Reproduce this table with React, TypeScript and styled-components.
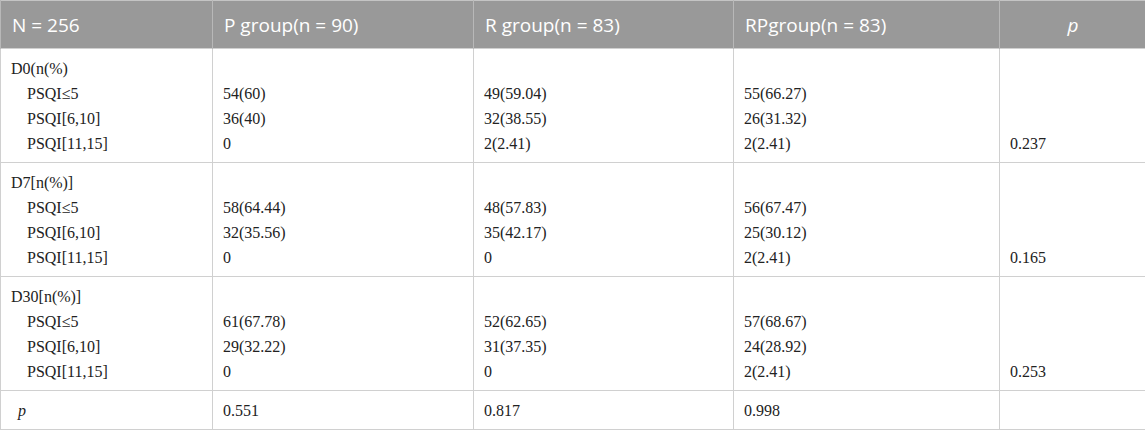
import React from "react";
import styled, { createGlobalStyle } from "styled-components";

const Global = createGlobalStyle`
  html, body { margin: 0; padding: 0; background: #ffffff; }
  #root { width: 1145px; }
`;

const Table = styled.table`
  width: 1145px;
  border-collapse: collapse;
  table-layout: fixed;
  border: 1px solid #c4c4c4;
`;

const HeadCell = styled.th<{ $center?: boolean; $w: number }>`
  width: ${(p) => p.$w}px;
  height: 48px;
  box-sizing: border-box;
  background: #999999;
  color: #ffffff;
  font-family: "Open Sans", "Noto Sans", sans-serif;
  font-size: 19px;
  font-weight: 400;
  text-align: ${(p) => (p.$center ? "center" : "left")};
  padding: 1px 10px 0 11px;
  border-left: 1px solid #b8b8b8;
  white-space: nowrap;
`;

const Cell = styled.td`
  vertical-align: top;
  padding: 7px 10px 6px 10px;
  border: 1px solid #d0d0d0;
  font-family: "Liberation Serif", "Times New Roman", serif;
  font-size: 16px;
  color: #222222;
`;

const Line = styled.div<{ $indent?: number }>`
  height: 25px;
  line-height: 25px;
  padding-left: ${(p) => p.$indent ?? 0}px;
  white-space: nowrap;
`;

const Italic = styled.span`
  font-style: italic;
`;

type Group = {
  title: string;
  rows: [string, string, string, string][];
  p: string;
};

const groups: Group[] = [
  {
    title: "D0(n(%)",
    rows: [
      ["PSQI≤5", "54(60)", "49(59.04)", "55(66.27)"],
      ["PSQI[6,10]", "36(40)", "32(38.55)", "26(31.32)"],
      ["PSQI[11,15]", "0", "2(2.41)", "2(2.41)"],
    ],
    p: "0.237",
  },
  {
    title: "D7[n(%)]",
    rows: [
      ["PSQI≤5", "58(64.44)", "48(57.83)", "56(67.47)"],
      ["PSQI[6,10]", "32(35.56)", "35(42.17)", "25(30.12)"],
      ["PSQI[11,15]", "0", "0", "2(2.41)"],
    ],
    p: "0.165",
  },
  {
    title: "D30[n(%)]",
    rows: [
      ["PSQI≤5", "61(67.78)", "52(62.65)", "57(68.67)"],
      ["PSQI[6,10]", "29(32.22)", "31(37.35)", "24(28.92)"],
      ["PSQI[11,15]", "0", "0", "2(2.41)"],
    ],
    p: "0.253",
  },
];

export default function App() {
  return (
    <>
      <Global />
      <Table>
        <thead>
          <tr>
            <HeadCell $w={212}>N = 256</HeadCell>
            <HeadCell $w={261}>P group(n = 90)</HeadCell>
            <HeadCell $w={260}>R group(n = 83)</HeadCell>
            <HeadCell $w={266}>RPgroup(n = 83)</HeadCell>
            <HeadCell $w={146} $center>
              <Italic>p</Italic>
            </HeadCell>
          </tr>
        </thead>
        <tbody>
          {groups.map((g) => (
            <tr key={g.title}>
              <Cell>
                <Line>{g.title}</Line>
                {g.rows.map((r) => (
                  <Line key={r[0]} $indent={16}>
                    {r[0]}
                  </Line>
                ))}
              </Cell>
              {[1, 2, 3].map((c) => (
                <Cell key={c}>
                  <Line />
                  {g.rows.map((r) => (
                    <Line key={r[0]}>{r[c]}</Line>
                  ))}
                </Cell>
              ))}
              <Cell>
                <Line />
                <Line />
                <Line />
                <Line>{g.p}</Line>
              </Cell>
            </tr>
          ))}
          <tr>
            <Cell>
              <Line $indent={7}>
                <Italic>p</Italic>
              </Line>
            </Cell>
            <Cell>
              <Line>0.551</Line>
            </Cell>
            <Cell>
              <Line>0.817</Line>
            </Cell>
            <Cell>
              <Line>0.998</Line>
            </Cell>
            <Cell>
              <Line />
            </Cell>
          </tr>
        </tbody>
      </Table>
    </>
  );
}
